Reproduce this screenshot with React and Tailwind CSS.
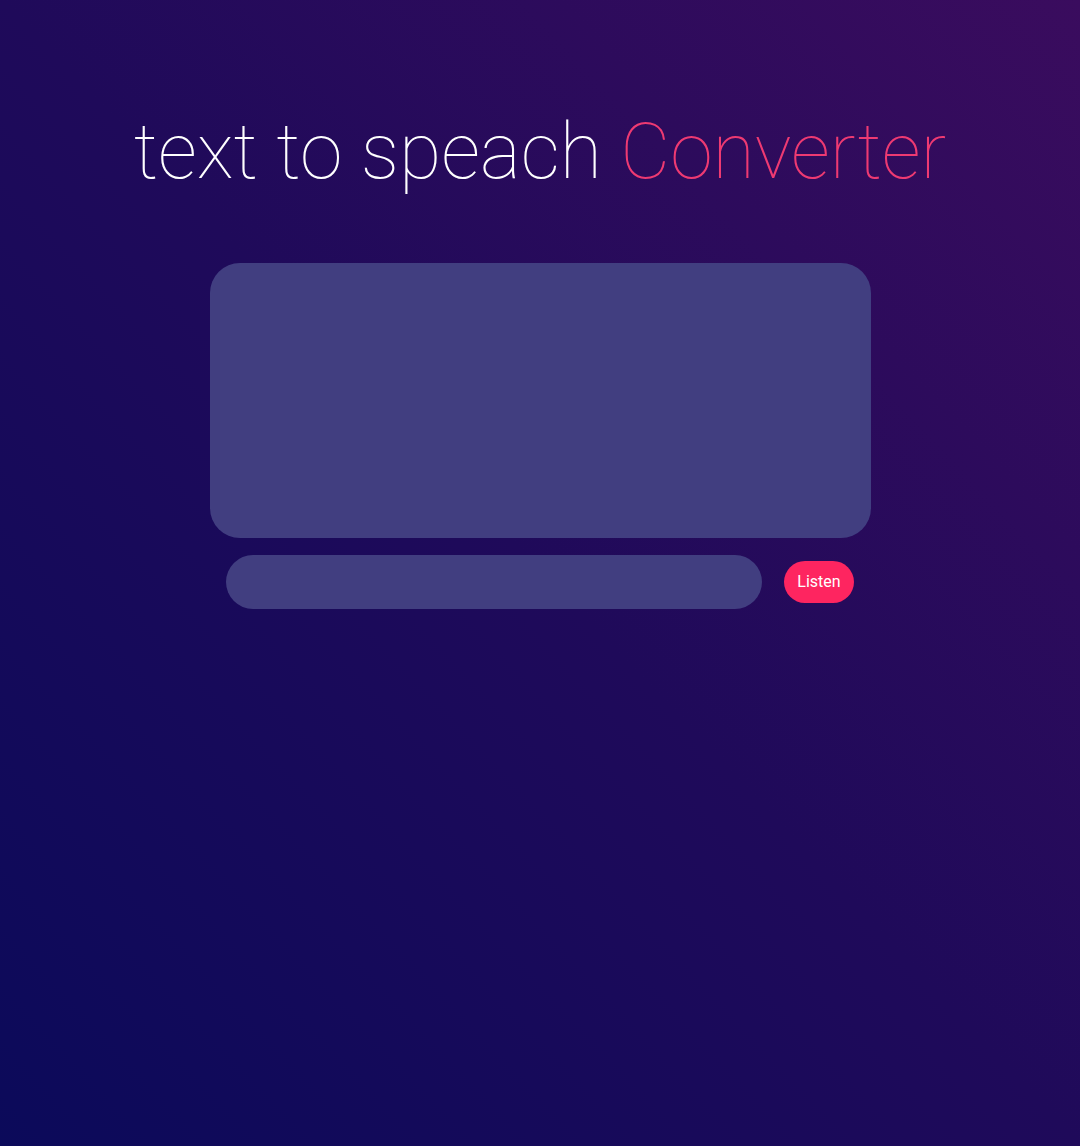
export default function App() {
  return (
    <div className="min-h-[1146px] w-full bg-[linear-gradient(to_top_right,#0b0a5a,#1f0a5a_50%,#3a0c5e)] font-['Roboto',sans-serif] flex flex-col items-center">
      <h1 className="mt-[108px] text-[77px] leading-[88px] font-thin text-white">
        text to speach <span className="text-[#ee3a72]">Converter</span>
      </h1>
      <textarea className="mt-[67px] w-[661px] h-[275px] rounded-[30px] bg-[#413e80] resize-none outline-none block" />
      <div className="mt-[17px] flex items-center gap-[22px]">
        <input className="w-[536px] h-[54px] rounded-full bg-[#413e80] outline-none px-5 text-white" />
        <button className="w-[70px] h-[42px] rounded-full bg-[#fe2560] text-white text-[16px] font-normal">
          Listen
        </button>
      </div>
    </div>
  );
}
